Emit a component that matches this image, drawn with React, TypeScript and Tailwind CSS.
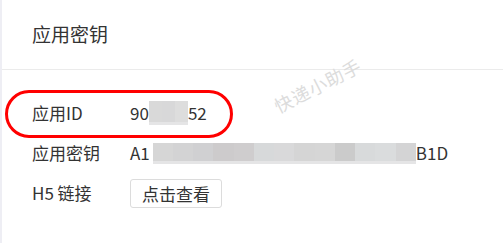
import React from 'react';

const font = { fontFamily: '"Noto Sans CJK SC", "Noto Sans", sans-serif' };

const keyCells = ['#d6d6d6', '#d3d3d4', '#d0d0d2', '#cdcbcc', '#cfcdce', '#d7d9da', '#d9d9da', '#d5d5d5', '#d6d6d6', '#cbcbcb', '#d8dadb', '#dadcdd', '#d4d4d5'];

const Mosaic: React.FC<{ cells: string[]; height: string }> = ({ cells, height }) => (
  <span className={`inline-flex flex-col ${height}`}>
    <span className="flex flex-1">
      {cells.map((c, i) => (
        <span key={i} className="flex-1" style={{ backgroundColor: c }} />
      ))}
    </span>
    <span className="h-[3px] bg-[#e5e5e6]" />
  </span>
);

export default function App() {
  return (
    <div className="relative w-[503px] h-[243px] bg-white text-[#333] overflow-hidden flex" style={font}>
      <div className="w-[2px] bg-[#eeeef4] shrink-0" />
      <div className="flex-1 flex flex-col">
        <div className="h-[70px] flex items-center pl-[30px] pb-[1px] border-b border-[#ebebeb] text-[19px]">
          应用密钥
        </div>
        <div className="pt-[23px] pl-[30px] text-[17px]">
          <div className="h-10 flex items-center">
            <span className="w-[98px]">应用ID</span>
            <span className="flex items-center">
              90
              <span className="w-[39px] h-[24px] flex">
                <Mosaic cells={['#d9d9d9', '#d8d8d9', '#dddddd']} height="w-[39px] h-[24px]" />
              </span>
              52
            </span>
          </div>
          <div className="h-10 flex items-center">
            <span className="w-[98px]">应用密钥</span>
            <span className="flex items-center">
              A1
              <span className="ml-[3px] flex">
                <Mosaic cells={keyCells} height="w-[263px] h-[21px]" />
              </span>
              B1D
            </span>
          </div>
          <div className="h-10 flex items-center">
            <span className="w-[98px]">H5 链接</span>
            <button className="h-[29px] px-[11px] border border-[#dcdcdc] rounded-[3px] bg-white text-[17px] leading-none">
              点击查看
            </button>
          </div>
        </div>
      </div>
      <div className="absolute left-[5px] top-[90px] w-[228px] h-[48px] rounded-full border-[3px] border-[#f00]" />
      <div className="absolute left-[270px] top-[72px] rotate-[-27deg] text-[18px] leading-[26px] text-[#dcdcdc] tracking-[1px] whitespace-nowrap">
        快递小助手
      </div>
    </div>
  );
}
